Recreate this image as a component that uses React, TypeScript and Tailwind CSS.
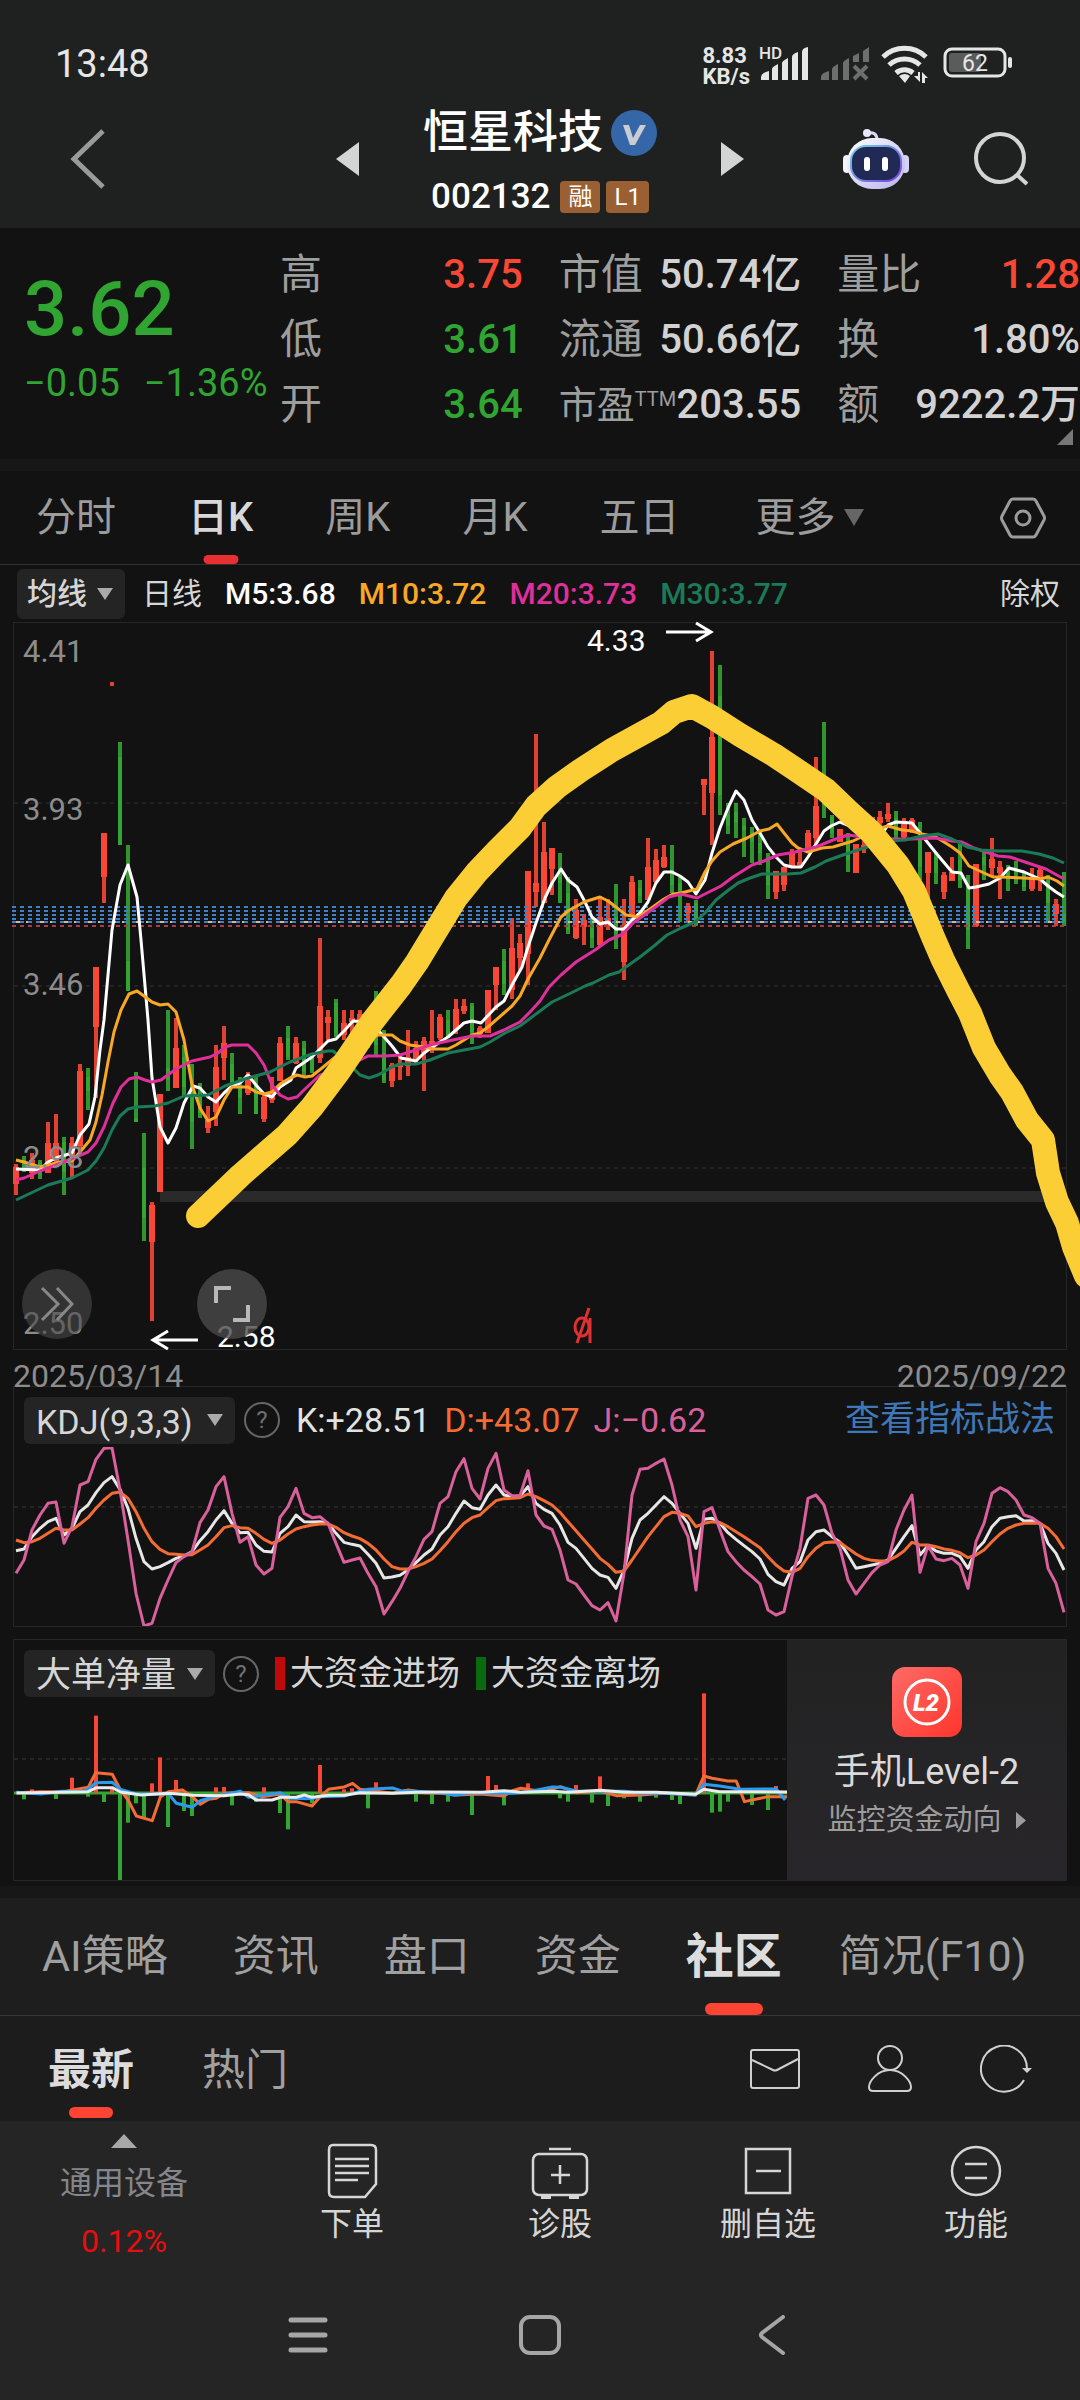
import { useState } from "react";
import type { ReactNode } from "react";

type Candle = [color: "r" | "g", high: number, low: number, top: number, bottom: number];

const STEP = 8;
const FIRST_X = 16;
const RED = "#f94736";
const GREEN = "#33a532";

// one entry per trading day: colour, wick top, wick bottom, body top, body bottom
const candles: Candle[] = [
  ["r", 1164, 1195, 1167, 1184], ["g", 1156, 1172, 1160, 1168], ["r", 1153, 1179, 1160, 1173], ["g", 1160, 1179, 1163, 1175],
  ["r", 1122, 1173, 1143, 1173], ["r", 1114, 1163, 1143, 1161], ["g", 1137, 1195, 1142, 1172], ["r", 1137, 1179, 1143, 1157],
  ["r", 1064, 1155, 1071, 1146], ["g", 1068, 1110, 1077, 1091], ["r", 967, 1098, 967, 1027], ["r", 833, 903, 833, 877],
  ["r", 682, 686, 682, 682], ["g", 742, 845, 757, 845], ["g", 845, 991, 961, 991], ["g", 1072, 1122, 1118, 1122],
  ["g", 1133, 1241, 1168, 1218], ["r", 1202, 1321, 1205, 1242], ["r", 1094, 1192, 1094, 1192], ["g", 1010, 1091, 1068, 1080],
  ["r", 1018, 1088, 1048, 1088], ["g", 1045, 1097, 1057, 1087], ["g", 1064, 1149, 1085, 1122], ["g", 1083, 1118, 1093, 1113],
  ["r", 1106, 1133, 1120, 1128], ["r", 1045, 1126, 1067, 1112], ["r", 1026, 1080, 1043, 1058], ["g", 1053, 1085, 1064, 1083],
  ["g", 1077, 1114, 1087, 1098], ["r", 1072, 1095, 1075, 1093], ["g", 1076, 1114, 1085, 1114], ["r", 1093, 1122, 1097, 1119],
  ["r", 1077, 1103, 1092, 1100], ["r", 1037, 1081, 1043, 1081], ["g", 1026, 1060, 1038, 1057], ["r", 1037, 1064, 1043, 1063],
  ["g", 1041, 1076, 1048, 1072], ["g", 1053, 1073, 1058, 1070], ["r", 938, 1063, 1006, 1058], ["r", 1010, 1040, 1017, 1023],
  ["g", 999, 1037, 1003, 1033], ["r", 1010, 1040, 1023, 1035], ["r", 1010, 1040, 1018, 1022], ["r", 1010, 1030, 1014, 1020],
  ["g", 1020, 1048, 1030, 1042], ["g", 991, 1055, 1001, 1045], ["g", 1030, 1083, 1053, 1080], ["r", 1063, 1087, 1065, 1081],
  ["r", 1057, 1080, 1063, 1067], ["r", 1030, 1076, 1057, 1066], ["r", 1041, 1063, 1048, 1060], ["r", 1037, 1091, 1041, 1053],
  ["r", 1010, 1053, 1041, 1050], ["r", 1014, 1040, 1017, 1038], ["g", 1010, 1038, 1020, 1037], ["r", 999, 1034, 1009, 1030],
  ["r", 999, 1014, 1006, 1011], ["g", 1003, 1044, 1006, 1032], ["r", 1026, 1038, 1028, 1034], ["r", 990, 1033, 990, 1033],
  ["r", 967, 1010, 967, 985], ["g", 949, 995, 961, 984], ["r", 918, 999, 948, 990], ["r", 934, 970, 943, 958],
  ["r", 871, 985, 871, 954], ["r", 734, 907, 883, 892], ["r", 822, 903, 852, 903], ["r", 848, 895, 848, 869],
  ["g", 853, 903, 873, 883], ["g", 877, 934, 893, 930], ["r", 899, 939, 910, 938], ["r", 914, 945, 920, 927],
  ["g", 918, 948, 928, 938], ["r", 896, 947, 917, 945], ["r", 899, 930, 918, 925], ["g", 884, 949, 917, 933],
  ["r", 899, 980, 928, 962], ["r", 876, 917, 882, 915], ["g", 880, 903, 888, 896], ["r", 838, 900, 867, 900],
  ["r", 849, 883, 860, 882], ["r", 845, 868, 857, 867], ["g", 845, 893, 870, 885], ["g", 877, 922, 883, 897],
  ["r", 903, 922, 906, 913], ["g", 900, 926, 903, 921], ["r", 779, 815, 779, 785], ["r", 651, 845, 737, 793],
  ["g", 665, 815, 696, 795], ["g", 803, 834, 815, 826], ["g", 803, 838, 812, 822], ["g", 818, 857, 826, 830],
  ["g", 827, 863, 832, 842], ["g", 831, 865, 843, 853], ["g", 853, 899, 875, 885], ["r", 871, 899, 871, 892],
  ["r", 867, 891, 867, 885], ["r", 849, 868, 853, 866], ["r", 849, 867, 862, 865], ["r", 830, 853, 833, 850],
  ["r", 757, 844, 806, 838], ["g", 722, 818, 780, 805], ["g", 815, 838, 817, 833], ["r", 829, 842, 829, 842],
  ["g", 833, 872, 843, 860], ["r", 844, 873, 844, 873], ["r", 840, 853, 845, 849], ["r", 817, 840, 817, 840],
  ["r", 811, 828, 817, 823], ["r", 803, 822, 814, 819], ["g", 811, 840, 818, 835], ["r", 818, 838, 824, 837],
  ["r", 818, 833, 820, 832], ["g", 822, 880, 835, 867], ["r", 852, 900, 852, 873], ["g", 852, 884, 857, 873],
  ["r", 872, 899, 875, 892], ["r", 857, 881, 872, 881], ["g", 844, 888, 860, 880], ["g", 875, 949, 889, 930],
  ["r", 864, 927, 864, 926], ["g", 852, 880, 857, 865], ["r", 838, 877, 859, 868], ["r", 861, 899, 867, 873],
  ["g", 865, 891, 873, 878], ["g", 861, 884, 868, 872], ["g", 872, 891, 875, 887], ["r", 868, 891, 877, 889],
  ["r", 866, 891, 870, 878], ["g", 875, 923, 880, 903], ["r", 899, 926, 904, 914], ["g", 872, 926, 914, 922],
];

const averages = [
  {
    color: "#ffffff",
    points:
      "16,1169 40,1170 48,1162 56,1158 72,1153 80,1135 89,1124 95,1097 100,1050 104,1020 112,930 120,885 128,865 137,897 141,940 148,1020 152,1078 160,1127 168,1143 176,1128 184,1103 193,1086 200,1088 208,1097 216,1102 224,1093 232,1086 240,1083 248,1075 256,1085 264,1094 272,1097 280,1087 291,1080 296,1068 312,1057 320,1049 328,1041 336,1039 344,1031 353,1021 368,1022 378,1030 392,1046 401,1058 416,1061 424,1053 440,1042 448,1037 464,1023 472,1021 481,1023 496,1007 504,1001 512,985 522,967 528,947 536,923 545,898 552,883 561,869 568,880 577,887 584,900 592,917 600,924 608,922 616,929 624,929 632,920 640,913 648,902 656,883 664,872 672,872 680,876 688,882 696,894 705,880 712,853 720,828 728,808 736,791 744,800 752,820 760,833 768,847 776,857 784,865 792,867 801,867 808,857 816,844 824,831 831,826 840,822 860,830 877,837 884,831 888,825 896,822 912,823 920,833 928,843 936,853 952,872 961,873 969,888 976,887 989,884 1000,878 1009,868 1024,872 1040,879 1048,886 1056,892 1064,897",
  },
  {
    color: "#f9a825",
    points:
      "16,1160 24,1162 40,1167 60,1162 72,1161 80,1152 90,1140 96,1122 102,1095 108,1062 114,1032 121,1010 129,994 137,991 144,996 152,1002 160,1005 168,1004 176,1012 184,1040 192,1085 200,1108 208,1121 216,1117 224,1100 232,1087 248,1087 256,1092 264,1094 272,1092 280,1084 290,1078 297,1075 305,1077 312,1076 322,1068 350,1045 378,1035 392,1035 400,1041 410,1045 424,1047 434,1049 448,1049 456,1045 472,1035 480,1033 488,1027 504,1013 512,1006 520,996 528,979 540,958 549,940 561,917 568,911 584,902 600,897 608,901 616,907 626,915 638,917 650,909 664,899 673,894 681,893 697,889 705,872 712,861 720,852 733,844 747,838 760,831 769,829 777,824 784,833 792,843 798,848 808,852 822,848 833,847 853,841 880,828 888,826 902,830 912,831 922,834 936,837 952,847 960,853 969,866 984,873 993,877 1001,877 1024,878 1040,879 1048,877 1057,881 1064,886",
  },
  {
    color: "#df2f9b",
    points:
      "16,1180 24,1178 40,1171 64,1162 88,1152 96,1143 104,1127 113,1103 121,1087 129,1079 137,1077 145,1080 152,1082 161,1080 176,1069 192,1061 210,1057 218,1053 225,1047 232,1045 248,1045 256,1053 264,1065 272,1085 280,1095 288,1099 297,1097 305,1089 320,1075 350,1068 356,1062 368,1056 385,1056 400,1055 416,1050 430,1045 448,1041 472,1036 490,1036 504,1030 520,1022 530,1012 540,1001 549,987 561,975 576,962 595,950 609,940 623,934 633,923 643,916 657,906 669,897 681,894 697,898 709,892 721,886 733,877 752,865 764,861 778,855 795,852 816,847 833,840 848,835 870,838 888,839 912,839 936,838 952,841 962,842 974,848 998,856 1010,857 1025,862 1046,869 1064,879",
  },
  {
    color: "#1b7a57",
    points:
      "16,1200 48,1185 72,1178 88,1170 96,1161 104,1148 112,1130 120,1116 128,1109 137,1107 155,1106 168,1103 184,1096 208,1095 225,1086 248,1078 270,1072 290,1062 312,1054 328,1051 333,1051 352,1067 360,1075 369,1078 378,1075 392,1067 400,1064 416,1064 430,1060 448,1053 464,1050 480,1047 490,1042 505,1033 520,1026 540,1011 552,1002 571,993 585,986 593,983 609,975 619,972 626,967 640,957 654,946 667,935 681,928 695,922 705,913 716,900 726,892 738,883 750,878 762,874 788,874 801,873 815,867 826,861 840,856 864,848 888,841 905,840 922,836 938,834 952,839 960,843 967,847 981,850 998,851 1022,851 1039,854 1053,858 1064,863",
  },
];

const trendStroke =
  "198,1216 241,1175 287,1135 312,1107 339,1071 372,1022 401,985 417,962 437,929 456,898 477,872 496,852 520,828 536,806 557,787 581,770 612,750 661,723 674,712 692,706 712,717 740,735 774,755 795,769 826,790 850,813 871,832 898,865 914,891 933,937 943,960 958,990 970,1013 984,1048 1000,1075 1012,1092 1027,1120 1043,1140 1048,1173 1057,1202 1067,1223 1074,1247 1086,1276";

const kdjLines = {
  d: [480, 488, 485, 475, 460, 445, 450, 450, 432, 413, 385, 360, 340, 336, 355, 395, 445, 485, 508, 521, 523, 525, 524, 510, 495, 470, 443, 437, 443, 445, 460, 478, 490, 480, 462, 447, 440, 435, 432, 432, 442, 458, 468, 476, 490, 510, 537, 560, 567, 567, 560, 550, 537, 512, 485, 455, 430, 413, 405, 383, 362, 356, 355, 353, 342, 350, 362, 375, 397, 425, 452, 480, 507, 535, 553, 577, 573, 540, 505, 470, 440, 410, 397, 400, 408, 440, 430, 425, 428, 440, 455, 470, 487, 503, 530, 555, 573, 577, 565, 530, 505, 488, 486, 487, 505, 522, 535, 541, 543, 542, 530, 513, 487, 495, 495, 500, 507, 511, 518, 533, 525, 510, 485, 462, 445, 435, 430, 430, 430, 445, 470, 507],
  k: [512, 507, 470, 445, 425, 415, 465, 445, 395, 375, 338, 308, 290, 328, 385, 475, 545, 567, 560, 548, 535, 528, 515, 482, 455, 420, 392, 430, 458, 457, 495, 514, 516, 460, 440, 405, 425, 426, 425, 430, 460, 487, 493, 498, 523, 550, 594, 591, 586, 570, 548, 525, 507, 465, 440, 400, 363, 383, 388, 345, 315, 345, 350, 348, 320, 370, 388, 400, 435, 487, 505, 535, 565, 585, 592, 625, 570, 475, 420, 400, 375, 350, 370, 400, 430, 505, 418, 415, 430, 458, 478, 497, 515, 537, 583, 605, 615, 565, 545, 480, 455, 450, 470, 487, 525, 565, 560, 555, 550, 540, 505, 470, 437, 525, 497, 513, 520, 520, 530, 565, 510, 485, 440, 415, 410, 407, 423, 422, 430, 490, 520, 570],
  j: [580, 540, 450, 405, 370, 366, 490, 440, 315, 305, 238, 205, 203, 330, 480, 640, 738, 730, 655, 600, 548, 530, 515, 428, 390, 320, 290, 400, 487, 470, 555, 582, 565, 412, 380, 325, 400, 413, 410, 430, 490, 547, 540, 534, 580, 620, 702, 665, 625, 575, 530, 478, 455, 370, 350, 275, 236, 325, 357, 265, 220, 330, 347, 347, 272, 405, 438, 448, 510, 600, 612, 645, 677, 690, 668, 723, 580, 345, 268, 265, 250, 237, 315, 420, 470, 630, 395, 383, 450, 515, 545, 570, 590, 612, 690, 705, 695, 590, 505, 355, 345, 375, 460, 505, 600, 642, 610, 578, 555, 545, 450, 390, 345, 577, 497, 537, 542, 535, 555, 625, 485, 430, 340, 323, 335, 360, 405, 413, 430, 565, 610, 697],
};

// [day index, bar end]; the zero line is at 489
const inflow = [[2, 478], [7, 443], [10, 257], [12, 476], [17, 460], [18, 382], [20, 450], [25, 472], [26, 471], [31, 472], [38, 405], [41, 478], [42, 475], [45, 457], [59, 438], [60, 465], [64, 460], [70, 465], [73, 439], [86, 190], [95, 468]];
const outflow = [[1, 508], [5, 507], [9, 500], [11, 516], [13, 750], [14, 578], [15, 520], [16, 563], [19, 591], [21, 543], [22, 558], [27, 526], [30, 515], [33, 549], [34, 598], [37, 520], [44, 535], [50, 515], [52, 522], [54, 515], [57, 555], [61, 526], [68, 505], [69, 515], [72, 518], [74, 528], [76, 505], [78, 515], [80, 503], [82, 510], [83, 522], [87, 548], [88, 545], [89, 515], [92, 525], [94, 540]];

const flowLines = [
  {
    color: "#f46c35",
    points:
      "24,488 60,485 90,486 128,472 139,428 163,433 175,480 186,510 198,558 221,572 233,500 245,485 265,480 279,500 291,523 303,508 314,505 326,490 350,488 361,488 380,500 407,492 418,515 430,515 453,528 465,500 477,478 500,471 512,460 523,478 546,484 570,490 593,480 617,488 640,490 663,495 697,492 732,498 744,482 756,475 790,485 814,470 837,488 872,484 895,497 930,495 965,490 1010,495 1022,438 1034,445 1057,453 1069,453 1081,515 1104,505 1115,500 1143,500",
  },
  {
    color: "#2a9cf0",
    points:
      "24,487 60,492 90,484 117,485 128,478 139,458 163,457 175,478 198,492 245,492 256,520 279,532 291,512 314,498 349,484 361,502 384,495 407,488 420,505 453,506 465,500 500,498 512,490 535,478 570,474 582,482 605,484 640,488 660,496 685,488 710,490 744,490 767,485 802,471 814,472 837,483 872,484 907,484 930,490 965,490 1010,495 1022,463 1045,468 1075,478 1127,477 1140,510",
  },
  {
    color: "#ececec",
    points:
      "24,489 128,485 140,473 163,473 175,486 205,495 245,490 280,496 325,497 349,492 361,494 372,510 395,510 407,502 430,502 442,495 453,502 477,496 500,496 523,488 570,490 605,487 640,486 700,487 732,482 756,487 802,484 825,487 872,481 907,487 953,487 1010,493 1022,478 1045,485 1143,486",
  },
];

function dayX(i: number) {
  return FIRST_X + i * STEP;
}

function toPoints(values: number[]) {
  return values.map((v, i) => `${dayX(i)},${v / 3}`).join(" ");
}

function Triangle({ className, points = "0,0 10,0 5,10" }: { className: string; points?: string }) {
  return (
    <svg viewBox="0 0 10 10" preserveAspectRatio="none" className={`shrink-0 fill-current ${className}`} aria-hidden="true">
      <polygon points={points} />
    </svg>
  );
}

function Picker({ label, options, className }: { label: string; options: string[]; className: string }) {
  return (
    <label className="relative flex items-center">
      <select
        aria-label={label}
        className={`appearance-none rounded-md bg-[#242424] text-[#d6d6d6] ${className}`}
      >
        {options.map((o) => (
          <option key={o}>{o}</option>
        ))}
      </select>
      <Triangle className="pointer-events-none absolute right-3 h-3 w-4 text-[#aaaaaa]" />
    </label>
  );
}

function HelpButton({ label }: { label: string }) {
  return (
    <button
      aria-label={label}
      className="flex size-[36px] items-center justify-center rounded-full border-2 border-[#666666] text-2xl text-[#707070]"
    >
      ?
    </button>
  );
}

function StatusBar() {
  return (
    <div className="flex h-[104px] items-end justify-between pr-[67px] pl-[55px] text-[#e6e6e6]">
      <span className="pb-4 text-[38px] leading-[48px]">13:48</span>
      <div className="flex items-center pb-4">
        <div className="flex flex-col text-[22px] leading-[21px] font-bold">
          <span>8.83</span>
          <span>KB/s</span>
        </div>
        <svg viewBox="0 0 254 44" className="ml-[9px] h-[44px] w-[254px]" aria-hidden="true">
          <text x="0" y="15" fontSize="17" fontWeight="500" fill="currentColor">HD</text>
          <path
            d="M2 36v-3q0-4 8-6v9zM13 36V25q0-2 6-5v16zM23 36V19q0-2 6-5v22zM33 36V13q0-3 6-5v28zM43 36V8q0-4 6-5v33z"
            fill="currentColor"
          />
          <g fill="#6d6f6e">
            <path d="M62 36v-3q0-4 8-6v9zM73 36V25q0-2 6-5v16zM84 36V19q0-2 6-5v22zM94 18v-6l6-3v9zM104 18V7l6-4v15z" />
            <path d="m95 22 13 13M108 22 95 35" stroke="#6d6f6e" strokeWidth="4" />
          </g>
          <g fill="none" stroke="currentColor" strokeWidth="5">
            <path d="M124 13a31 31 0 0 1 43 0" />
            <path d="M130 21a23 23 0 0 1 31 0" />
            <path d="M137 29a13 13 0 0 1 17 0" />
          </g>
          <path d="M140 32q6-4 11 0l-5 7zM155 32h4v-4l2 0v10zM163 39V28l6 6h-3v5z" fill="currentColor" />
          <rect x="186" y="5" width="60" height="27" rx="7" fill="none" stroke="currentColor" strokeWidth="3" />
          <rect x="190" y="9" width="32" height="19" rx="3" fill="#5a5c5b" />
          <rect x="249" y="13" width="4" height="11" rx="2" fill="currentColor" />
          <text x="216" y="27" fontSize="23" textAnchor="middle" fill="currentColor">62</text>
        </svg>
      </div>
    </div>
  );
}

function Robot() {
  return (
    <svg viewBox="0 0 66 62" className="h-[62px] w-[66px]" aria-hidden="true">
      <defs>
        <linearGradient id="shell" x1="0" y1="0" x2="1" y2="1">
          <stop offset="0" stopColor="#ffffff" />
          <stop offset="1" stopColor="#b7b3ea" />
        </linearGradient>
        <linearGradient id="rim" x1="0" y1="0" x2="1" y2="1">
          <stop offset="0" stopColor="#6fd3ea" />
          <stop offset="1" stopColor="#7a3fe0" />
        </linearGradient>
      </defs>
      <path d="M24 5q10-2 10 7" fill="none" stroke="#dcdaf6" strokeWidth="3" />
      <circle cx="24" cy="5" r="4" fill="#e9e8fb" />
      <rect x="0" y="27" width="8" height="18" rx="4" fill="#f2f1fd" />
      <rect x="58" y="27" width="8" height="18" rx="4" fill="#d5d2f5" />
      <rect x="4" y="10" width="58" height="51" rx="25" fill="url(#shell)" />
      <rect x="8" y="18" width="50" height="35" rx="15" fill="#202a55" stroke="url(#rim)" strokeWidth="2" />
      <rect x="21" y="29" width="6" height="14" rx="3" fill="#fff" />
      <rect x="39" y="29" width="6" height="14" rx="3" fill="#fff" />
    </svg>
  );
}

function Header() {
  return (
    <div className="grid h-[124px] grid-cols-[1fr_auto_1fr] items-center pb-[14px]">
      <button aria-label="返回" className="ml-[68px] w-10 text-[#9a9a9a]">
        <svg viewBox="0 0 40 62" className="h-[62px] w-10" fill="none" stroke="currentColor" strokeWidth="5">
          <path d="M35 3 6 31l29 28" />
        </svg>
      </button>
      <div className="flex w-[408px] items-center justify-between text-[#d4d4d4]">
        <button aria-label="上一只">
          <Triangle points="10,0 10,10 0,5" className="h-[34px] w-[23px]" />
        </button>
        <div className="flex flex-col items-center gap-5 text-white">
          <h1 className="flex items-center gap-2 text-[45px] leading-[56px] font-medium">
            恒星科技
            <svg viewBox="0 0 46 46" className="size-[46px]" aria-hidden="true">
              <circle cx="23" cy="23" r="23" fill="#3466a8" />
              <path d="M12 15h6l4 13 7-13h6L24 35h-5z" fill="#c9cdd2" />
            </svg>
          </h1>
          <div className="flex items-center gap-[6px] text-[35px] leading-8 font-medium">
            <span className="mr-1">002132</span>
            <span className="rounded-sm bg-[#9a6033] px-2 text-2xl leading-8 font-normal">融</span>
            <span className="rounded-sm bg-[#9a6033] px-2 text-2xl leading-8 font-normal">L1</span>
          </div>
        </div>
        <button aria-label="下一只">
          <Triangle points="0,0 0,10 10,5" className="h-[34px] w-[23px]" />
        </button>
      </div>
      <div className="mr-[51px] flex items-center justify-end gap-16">
        <button aria-label="智能助手">
          <Robot />
        </button>
        <button aria-label="搜索" className="text-[#d4d4d4]">
          <svg viewBox="0 0 56 56" className="size-14" fill="none" stroke="currentColor" strokeWidth="4">
            <circle cx="27" cy="27" r="24" />
            <path d="m44 44 10 9" />
          </svg>
        </button>
      </div>
    </div>
  );
}

function Stat({ label, value, tone = "text-[#d2d2d2]" }: { label: ReactNode; value: string; tone?: string }) {
  return (
    <div className="flex items-center justify-between leading-[66px] whitespace-nowrap">
      <dt className="text-[42px] text-[#9e9e9e]">{label}</dt>
      <dd className={`text-[40px] font-medium ${tone}`}>{value}</dd>
    </div>
  );
}

function Quote() {
  return (
    <section className="relative flex h-[231px] pt-[15px]">
      <div className="w-[280px] shrink-0 pt-6 pl-6 text-[#30a532]">
        <div className="text-[76px] leading-[84px] font-medium">3.62</div>
        <div className="flex gap-6 text-[38px] leading-[64px] whitespace-nowrap">
          <span>−0.05</span>
          <span>−1.36%</span>
        </div>
      </div>
      <dl className="grid h-[194px] flex-1 grid-flow-col grid-cols-3 grid-rows-3 gap-x-9">
        <Stat label="高" value="3.75" tone="text-[#f94736]" />
        <Stat label="低" value="3.61" tone="text-[#30a532]" />
        <Stat label="开" value="3.64" tone="text-[#30a532]" />
        <Stat label="市值" value="50.74亿" />
        <Stat label="流通" value="50.66亿" />
        <Stat
          label={
            <span className="text-[38px]">
              市盈<sup className="-top-3 text-[20px]">TTM</sup>
            </span>
          }
          value="203.55"
        />
        <Stat label="量比" value="1.28" tone="text-[#f94736]" />
        <Stat label="换" value="1.80%" />
        <Stat label="额" value="9222.2万" />
      </dl>
      <Triangle points="10,0 10,10 0,10" className="absolute right-[7px] bottom-[14px] size-4 text-[#777777]" />
    </section>
  );
}

const periods = ["分时", "日K", "周K", "月K", "五日"];

function PeriodTabs() {
  const [active, setActive] = useState("日K");
  return (
    <nav className="flex h-[94px] items-stretch gap-[72px] border-b border-[#303030] pr-[34px] pl-9 text-[40px] text-[#9c9c9c]">
      {periods.map((p) => (
        <button key={p} onClick={() => setActive(p)} className={`relative ${active === p ? "font-medium text-[#d8d8d8]" : ""}`}>
          {p}
          {active === p && (
            <span className="absolute bottom-0 left-1/2 h-[9px] w-[35px] -translate-x-1/2 rounded-full bg-[#e93030]" />
          )}
        </button>
      ))}
      <button aria-haspopup="menu" className="ml-1 flex items-center gap-2">
        更多
        <Triangle className="h-[17px] w-5 text-[#666666]" />
      </button>
      <button aria-label="设置" className="ml-auto">
        <svg viewBox="0 0 46 42" className="h-[42px] w-[46px]" fill="none" stroke="currentColor" strokeWidth="3">
          <path d="M13 2h20q2 0 3 2l8 15q1 2 0 4l-8 15q-1 2-3 2H13q-2 0-3-2L2 23q-1-2 0-4l8-15q1-2 3-2z" />
          <circle cx="23" cy="21" r="7" />
        </svg>
      </button>
    </nav>
  );
}

function PriceChart() {
  return (
    <div className="relative mx-[13px] border border-[#262626]">
      <svg viewBox="14 623 1052 726" className="block w-full overflow-visible" role="img" aria-label="日K线图">
        <g stroke="#333333" strokeWidth="1" strokeDasharray="4 4">
          <path d="M14 803H1066M14 986H1066M14 1168H1066" />
        </g>
        <rect x="160" y="1191" width="905" height="11" fill="#2a2a2a" />
        {candles.map(([color, high, low, top, bottom], i) => (
          <g key={i} fill={color === "r" ? RED : GREEN}>
            <rect x={dayX(i) - 2} y={high} width="4" height={low - high} opacity="0.9" />
            <rect x={dayX(i) - (color === "r" ? 3 : 2)} y={top} width={color === "r" ? 6 : 4} height={bottom - top} />
          </g>
        ))}
        <path d="M14 922H1066" stroke="#c9bba0" strokeWidth="2" strokeDasharray="6 6" />
        <g stroke="#4080c4" strokeWidth="2" strokeDasharray="4 4">
          <path d="M12 907H1066M12 911H1066M12 915H1066M12 919H1066M12 922H1066" />
        </g>
        <path d="M12 926H1066" stroke="#b03a40" strokeWidth="2" strokeDasharray="4 4" />
        {averages.map((line) => (
          <polyline key={line.color} points={line.points} fill="none" stroke={line.color} strokeWidth="3" strokeLinejoin="round" />
        ))}
        <g fontSize="31" fill="#8c8c8c">
          <text x="23" y="662">4.41</text>
          <text x="23" y="820">3.93</text>
          <text x="23" y="995">3.46</text>
          <text x="23" y="1168">2.98</text>
          <text x="23" y="1334">2.50</text>
        </g>
        <g fontSize="30" fill="#ffffff">
          <text x="587" y="651">4.33</text>
          <text x="217" y="1347">2.58</text>
        </g>
        <g fill="none" stroke="#ffffff" strokeWidth="3">
          <path d="M666 632h45M696 623l15 9-15 9" />
          <path d="M198 1340h-45M168 1331l-15 9 15 9" />
        </g>
        <g fill="none" stroke="#e03030" strokeWidth="3">
          <ellipse cx="582" cy="1327" rx="7" ry="9" />
          <path d="M590 1318v25M589 1308l-12 35" />
        </g>
        <polyline points={trendStroke} fill="none" stroke="#fcce35" strokeWidth="24" strokeLinecap="round" strokeLinejoin="round" />
      </svg>
      <button aria-label="快进" className="absolute bottom-[10px] left-2 flex size-[70px] items-center justify-center rounded-full bg-[#4a4a4a]/60 text-[#888888]">
        <svg viewBox="0 0 34 36" className="h-9 w-[34px]" fill="none" stroke="currentColor" strokeWidth="3">
          <path d="m2 2 16 16L2 34M17 2l15 16-15 16" />
        </svg>
      </button>
      <button aria-label="全屏" className="absolute bottom-[10px] left-[183px] flex size-[70px] items-center justify-center rounded-full bg-[#4a4a4a]/80 text-[#b8b8b8]">
        <svg viewBox="0 0 36 36" className="size-9" fill="none" stroke="currentColor" strokeWidth="4">
          <path d="M2 17V2h15M34 19v15H19" />
        </svg>
      </button>
    </div>
  );
}

function KdjPanel() {
  return (
    <section className="mx-[13px] border border-[#262626]">
      <div className="flex h-[60px] items-center gap-[14px] pt-[6px] pr-[11px] pl-[10px] text-[34px]">
        <div className="mr-[2px] flex items-center gap-[9px]">
          <Picker label="副图指标" options={["KDJ(9,3,3)"]} className="h-[47px] pr-[42px] pl-3" />
          <HelpButton label="KDJ说明" />
        </div>
        <span className="text-[#e2e2e2]">K:+28.51</span>
        <span className="text-[#f46c35]">D:+43.07</span>
        <span className="text-[#d9609a]">J:−0.62</span>
        <a href="#kdj" className="ml-auto text-[35px] text-[#3f78b8]">
          查看指标战法
        </a>
      </div>
      <svg viewBox="14 67 1052 179" className="block w-full" role="img" aria-label="KDJ">
        <path d="M14 127H1066" stroke="#3a3a3a" strokeWidth="1" strokeDasharray="4 4" />
        <g fill="none" strokeWidth="3" strokeLinejoin="round">
          <polyline points={toPoints(kdjLines.k)} stroke="#e6e6e6" />
          <polyline points={toPoints(kdjLines.d)} stroke="#f46c35" />
          <polyline points={toPoints(kdjLines.j)} stroke="#d9609a" />
        </g>
      </svg>
    </section>
  );
}

function FlowPanel() {
  return (
    <section className="mx-[13px] mt-3 flex border border-[#262626]">
      <div className="min-w-0 flex-1">
        <div className="flex h-[53px] items-center pt-[14px] pl-[10px] text-[34px] whitespace-nowrap text-[#d6d6d6]">
          <Picker label="资金指标" options={["大单净量"]} className="h-[47px] pr-[38px] pl-3 text-[35px]" />
          <div className="mr-4 ml-2">
            <HelpButton label="大单净量说明" />
          </div>
          <span className="mr-[5px] h-[33px] w-[10px] bg-[#c00a0a]" />
          大资金进场
          <span className="mr-[5px] ml-4 h-[33px] w-[10px] bg-[#0a6a10]" />
          大资金离场
        </div>
        <svg viewBox="14 63 773 187" className="block w-full" role="img" aria-label="大单净量">
          <path d="M14 129H787" stroke="#3a3a3a" strokeWidth="1" strokeDasharray="4 4" />
          <path d="M14 163H787" stroke={GREEN} strokeWidth="3" />
          {inflow.map(([i, v]) => (
            <rect key={i} x={dayX(i) - 2} y={v / 3} width="4" height={(489 - v) / 3} fill={RED} />
          ))}
          {outflow.map(([i, v]) => (
            <rect key={i} x={dayX(i) - 2} y={163} width="4" height={(v - 489) / 3} fill={GREEN} />
          ))}
          <g transform="scale(0.6887 0.3333)" fill="none" strokeWidth="3" strokeLinejoin="round">
            {flowLines.map((line) => (
              <polyline key={line.color} points={line.points} stroke={line.color} vectorEffect="non-scaling-stroke" />
            ))}
          </g>
        </svg>
      </div>
      <a href="#level2" className="flex w-[279px] flex-col items-center bg-linear-to-b from-[#222222] to-[#28262a] pt-[27px]">
        <svg viewBox="0 0 70 70" className="size-[70px]" aria-hidden="true">
          <defs>
            <linearGradient id="l2" x1="0" y1="0" x2="1" y2="1">
              <stop offset="0" stopColor="#ff6a66" />
              <stop offset="1" stopColor="#ff352c" />
            </linearGradient>
          </defs>
          <rect width="70" height="70" rx="13" fill="url(#l2)" />
          <circle cx="35" cy="35" r="22" fill="none" stroke="#fff" strokeWidth="3" />
          <text x="34" y="44" fontSize="24" fontWeight="900" fontStyle="italic" textAnchor="middle" fill="#fff">L2</text>
        </svg>
        <span className="mt-2 text-4xl leading-[54px] text-[#dadada]">手机Level-2</span>
        <span className="flex items-center gap-[14px] text-[29px] leading-[42px] text-[#9c9c9c]">
          监控资金动向
          <Triangle points="0,0 0,10 10,5" className="h-[17px] w-[10px]" />
        </span>
      </a>
    </section>
  );
}

const sections = ["AI策略", "资讯", "盘口", "资金", "社区", "简况(F10)"];

function SectionTabs() {
  const [active, setActive] = useState("社区");
  return (
    <nav className="flex h-[118px] gap-[65px] border-b border-[#353535] bg-[#1e1e1e] pl-[42px] text-[43px] whitespace-nowrap text-[#a0a0a0]">
      {sections.map((s) => (
        <button key={s} onClick={() => setActive(s)} className={`relative ${active === s ? "-mr-2 text-5xl font-bold text-[#dcdcdc]" : ""}`}>
          {s}
          {active === s && (
            <span className="absolute bottom-0 left-1/2 h-3 w-[58px] -translate-x-1/2 rounded-full bg-[#ff4433]" />
          )}
        </button>
      ))}
    </nav>
  );
}

function FeedBar() {
  return (
    <div className="flex h-[105px] items-stretch bg-[#1c1c1c] pr-[48px] pl-12 text-[43px] text-[#a0a0a0]">
      <button className="relative pt-1 font-bold text-[#dcdcdc]">
        最新
        <span className="absolute bottom-[3px] left-1/2 h-[11px] w-11 -translate-x-1/2 rounded-full bg-[#ff4433]" />
      </button>
      <button className="ml-[68px] pt-1">热门</button>
      <div className="ml-auto flex items-center gap-[68px] text-[#d0d0d0]">
        <button aria-label="消息">
          <svg viewBox="0 0 50 40" className="h-10 w-[50px]" fill="none" stroke="currentColor" strokeWidth="2">
            <rect x="1" y="1" width="48" height="38" rx="2" />
            <path d="m2 11 21 10q2 1 4 0l21-11" />
          </svg>
        </button>
        <button aria-label="我的">
          <svg viewBox="0 0 44 48" className="h-12 w-11" fill="none" stroke="currentColor" strokeWidth="2">
            <circle cx="22" cy="13" r="12" />
            <path d="M22 25c-13 0-21 12-21 17q0 4 4 4h34q4 0 4-4c0-5-8-17-21-17z" />
          </svg>
        </button>
        <button aria-label="刷新">
          <svg viewBox="0 0 52 48" className="h-12 w-[52px]" fill="none" stroke="currentColor" strokeWidth="2">
            <path d="M47 24A23 23 0 1 0 44 35" />
            <path d="M42 23h10l-5 5z" fill="currentColor" stroke="none" />
          </svg>
        </button>
      </div>
    </div>
  );
}

function Action({ label, children }: { label: string; children: ReactNode }) {
  return (
    <button className="flex flex-col items-center pt-[22px] text-[32px] leading-[50px] text-[#d6d6d6]">
      <svg viewBox="0 0 58 56" className="h-14 w-[58px]" fill="none" stroke="currentColor" strokeWidth="2.5" aria-hidden="true">
        {children}
      </svg>
      {label}
    </button>
  );
}

function ActionBar() {
  return (
    <div className="grid h-[149px] grid-cols-[248px_repeat(4,1fr)] items-start">
      <a href="#sector" className="flex flex-col items-center pt-[13px] text-[32px]">
        <Triangle points="5,0 10,10 0,10" className="h-[14px] w-[26px] text-[#a8a8a8]" />
        <span className="pt-2 leading-[54px] text-[#85858c]">通用设备</span>
        <span className="leading-[62px] text-[#e60f0f]">0.12%</span>
      </a>
      <Action label="下单">
        <path d="M10 2h38q5 0 5 5v34L42 54H11q-5 0-5-5V7q0-5 4-5z" />
        <path d="M12 16h34M12 23h34M12 30h34M12 37h23" />
      </Action>
      <Action label="诊股">
        <rect x="2" y="11" width="54" height="41" rx="6" />
        <path d="M18 6h22M29 22v19M20 32h19" />
        <path d="M10 54h10M38 54h10" strokeWidth="4" />
      </Action>
      <Action label="删自选">
        <rect x="7" y="6" width="44" height="44" />
        <path d="M17 28h25" />
      </Action>
      <Action label="功能">
        <circle cx="29" cy="28" r="24" />
        <path d="M18 21h22M18 35h22" />
      </Action>
    </div>
  );
}

function SystemNav() {
  return (
    <div className="flex h-[130px] justify-center gap-[190px] pt-[45px] text-[#a6a6a6]">
      <button aria-label="最近任务" className="self-start">
        <svg viewBox="0 0 40 40" className="size-10" fill="none" stroke="currentColor" strokeWidth="5" strokeLinecap="round">
          <path d="M3 5h34M3 20h34M3 35h34" />
        </svg>
      </button>
      <button aria-label="主屏幕" className="self-start">
        <svg viewBox="0 0 44 40" className="h-10 w-11" fill="none" stroke="currentColor" strokeWidth="4">
          <rect x="3" y="2" width="38" height="36" rx="9" />
        </svg>
      </button>
      <button aria-label="返回上一页" className="self-start">
        <svg viewBox="0 0 40 40" className="size-10" fill="none" stroke="currentColor" strokeWidth="4" strokeLinecap="round">
          <path d="M31 2 10 18q-2 2 0 4l21 16" />
        </svg>
      </button>
    </div>
  );
}

export default function App() {
  return (
    <main lang="zh-CN" className="min-h-screen w-full overflow-x-hidden bg-[#121212] font-['Roboto','Noto_Sans_CJK_SC',sans-serif]">
      <header className="bg-[#1f2120]">
        <StatusBar />
        <Header />
      </header>
      <Quote />
      <div className="h-3 bg-[#171717]" />
      <PeriodTabs />
      <div className="flex h-[57px] items-center gap-[23px] pr-5 pl-[17px] text-[30px] font-medium whitespace-nowrap">
        <div className="-mr-[6px]">
          <Picker label="主图指标" options={["均线"]} className="h-[50px] pr-[38px] pl-[10px]" />
        </div>
        <span className="font-normal text-[#d6d6d6]">日线</span>
        <span className="text-white">M5:3.68</span>
        <span className="text-[#f9a825]">M10:3.72</span>
        <span className="text-[#df2f9b]">M20:3.73</span>
        <span className="text-[#1b7a57]">M30:3.77</span>
        <button className="ml-auto font-normal text-[#d6d6d6]">除权</button>
      </div>
      <PriceChart />
      <div className="flex h-[36px] justify-between px-[13px] text-[32px] leading-[52px] text-[#8c8c8c]">
        <span>2025/03/14</span>
        <span>2025/09/22</span>
      </div>
      <KdjPanel />
      <FlowPanel />
      <div className="mt-[5px] h-3 bg-[#171717]" />
      <SectionTabs />
      <FeedBar />
      <footer className="bg-[#252525]">
        <ActionBar />
        <SystemNav />
      </footer>
    </main>
  );
}
